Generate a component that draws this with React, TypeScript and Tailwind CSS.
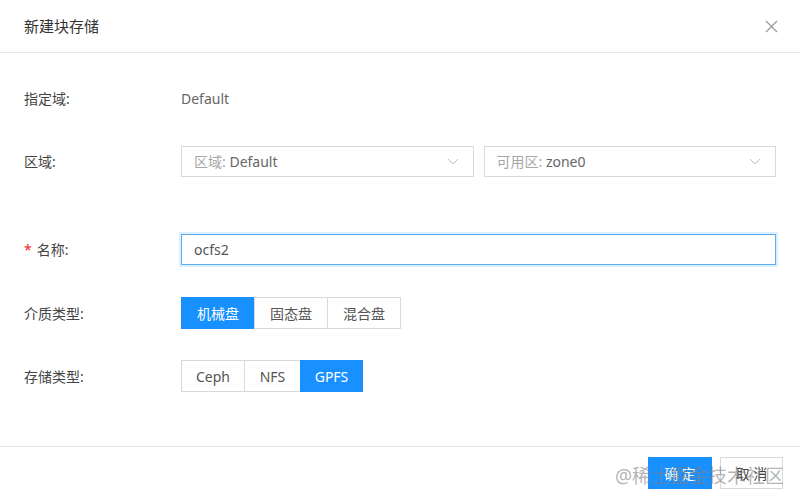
import React from 'react'

const font = { fontFamily: '"Noto Sans", "Noto Sans CJK SC", sans-serif' }

function Chevron() {
  return (
    <svg width="12" height="7" viewBox="0 0 12 7" fill="none" className="shrink-0">
      <path d="M1 1l5 5 5-5" stroke="#c0c0c0" strokeWidth="1" />
    </svg>
  )
}

function Select({ label, value }: { label: string; value: string }) {
  return (
    <div className="flex h-[31px] flex-1 items-center justify-between border border-[#d9d9d9] bg-white pl-[12px] pr-[14px] text-[14px]">
      <span>
        <span className="text-[#a6a6a6]">{label}</span>
        <span className="text-[#666]"> {value}</span>
      </span>
      <Chevron />
    </div>
  )
}

function Group({ items, active, widths }: { items: string[]; active: number; widths: string[] }) {
  return (
    <div className="flex h-[32px]">
      {items.map((it, i) => (
        <div
          key={it}
          className={`flex items-center justify-center text-[14px] ${widths[i]} ${
            i === active
              ? 'bg-[#1890ff] text-white border border-[#1890ff]'
              : 'bg-white text-[#555] border border-[#d9d9d9]'
          } ${i > 0 ? '-ml-px' : ''}`}
        >
          {it}
        </div>
      ))}
    </div>
  )
}

function Row({ label, required, children, className }: { label: string; required?: boolean; children: React.ReactNode; className?: string }) {
  return (
    <div className={`flex items-center ${className ?? ''}`}>
      <div className="w-[157px] shrink-0 text-[14px] text-[#444]">
        {required && <span className="mr-[5px] text-[#f5222d]">*</span>}
        {label}:
      </div>
      <div className="flex flex-1 items-center">{children}</div>
    </div>
  )
}

export default function App() {
  return (
    <div className="relative flex h-[501px] w-[800px] flex-col overflow-hidden bg-white" style={font}>
      <div className="flex h-[53px] shrink-0 items-center justify-between border-b border-[#e8e8e8] pl-[24px] pr-[22px]">
        <span className="text-[15px] text-[#333]">新建块存储</span>
        <svg width="13" height="13" viewBox="0 0 13 13" fill="none">
          <path d="M1 1l11 11M12 1L1 12" stroke="#999" strokeWidth="1.2" />
        </svg>
      </div>

      <div className="flex-1 pl-[24px] pr-[24px] pt-[30px]">
        <Row label="指定域" className="h-[30px]">
          <span className="text-[14px] text-[#666]">Default</span>
        </Row>
        <Row label="区域" className="mt-[33px] h-[31px]">
          <div className="flex flex-1 gap-[10px]">
            <Select label="区域:" value="Default" />
            <Select label="可用区:" value="zone0" />
          </div>
        </Row>
        <Row label="名称" required className="mt-[57px] h-[31px]">
          <div className="flex h-[31px] flex-1 items-center border border-[#5aaef5] pl-[12px] text-[14px] text-[#555] shadow-[0_0_0_2px_rgba(24,144,255,0.15)]">
            ocfs2
          </div>
        </Row>
        <Row label="介质类型" className="mt-[32px] h-[32px]">
          <Group items={['机械盘', '固态盘', '混合盘']} active={0} widths={['w-[74px]', 'w-[74px]', 'w-[74px]']} />
        </Row>
        <Row label="存储类型" className="mt-[31px] h-[32px]">
          <Group items={['Ceph', 'NFS', 'GPFS']} active={2} widths={['w-[64px]', 'w-[57px]', 'w-[63px]']} />
        </Row>
      </div>

      <div className="flex h-[55px] shrink-0 items-start justify-end gap-[8px] border-t border-[#e8e8e8] pr-[17px] pt-[10px]">
        <div className="flex h-[32px] w-[64px] items-center justify-center bg-[#1890ff] text-[14px] text-white">确 定</div>
        <div className="flex h-[32px] w-[63px] items-center justify-center border border-[#d9d9d9] bg-white text-[14px] text-[#444]">取 消</div>
      </div>

      <div className="pointer-events-none absolute bottom-[13px] right-[16px] text-[19px] leading-[24px] text-[rgba(130,130,130,0.6)]">
        @稀土掘金技术社区
      </div>
    </div>
  )
}
